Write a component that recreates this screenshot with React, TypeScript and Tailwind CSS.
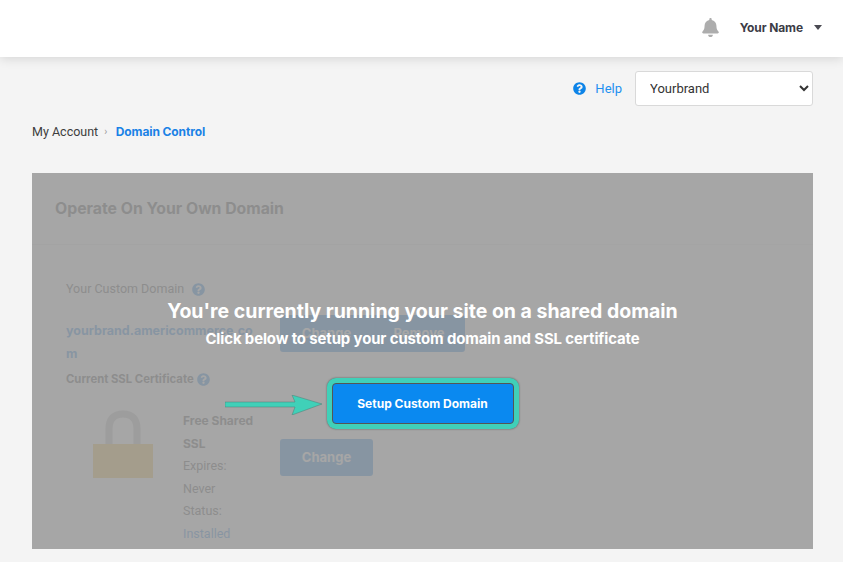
import React from "react";

const bold = "font-['Inter','Liberation_Sans',sans-serif]";

function Q({ className }: { className: string }) {
  return (
    <svg viewBox="0 0 512 512" className={className} fill="currentColor">
      <path d="M504 256c0 137-111 248-248 248S8 393 8 256 119 8 256 8s248 111 248 248zM262.700 90c-54.500 0-89.300 23-116.500 63.800-3.500 5.300-2.400 12.400 2.700 16.300l34.700 26.300c5.200 3.900 12.600 3 16.700-2.100 17.900-22.700 30.100-35.800 57.300-35.800 20.400 0 45.700 13.100 45.700 32.900 0 15-12.400 22.700-32.500 34C247.100 238.500 216 254.900 216 296v4c0 6.600 5.400 12 12 12h56c6.600 0 12-5.400 12-12v-1.300c0-28.500 83.200-29.700 83.200-106.700 0-58-60.200-102-116.500-102zM256 338c-25.400 0-46 20.600-46 46s20.600 46 46 46 46-20.600 46-46-20.600-46-46-46z" />
    </svg>
  );
}

function Bell() {
  return (
    <svg viewBox="0 0 448 512" className="h-[19px] w-[17px] text-[#adadad]" fill="currentColor">
      <path d="M224 512c35.300 0 64-28.700 64-64H160c0 35.300 28.700 64 64 64zm215.400-149.700c-19.300-20.800-55.500-52-55.500-154.300 0-77.700-54.500-139.900-127.900-155.200V32c0-17.700-14.300-32-32-32s-32 14.300-32 32v20.800C118.600 68.100 64.100 130.300 64.100 208c0 102.300-36.200 133.500-55.500 154.300-6 6.400-8.700 14.100-8.600 21.700.1 16.400 13 32 32.100 32h383.800c19.100 0 32-15.600 32.100-32 .1-7.600-2.600-15.300-8.600-21.700z" />
    </svg>
  );
}

function Lock() {
  return (
    <svg viewBox="0 0 60 68" className="h-[68px] w-[60px]">
      <path d="M16 36V19C16 9 21 4 30 4s14 5 14 15v17" fill="none" stroke="#bbbbbb" strokeWidth="7" />
      <rect x="0" y="34" width="60" height="34" fill="#f5c040" />
    </svg>
  );
}

export default function App() {
  return (
    <div className="min-h-[562px] overflow-hidden bg-[#f4f4f4] font-['Roboto','Liberation_Sans',sans-serif]">
      <header className="flex h-[57px] items-center justify-end bg-white pb-[2px] pr-[21px] shadow-[0_2px_10px_rgba(0,0,0,0.12)]">
        <Bell />
        <span className={`${bold} ml-[21px] text-[12px] font-bold tracking-[-0.1px] text-[#3c3c46]`}>Your Name</span>
        <span className="ml-[11px] h-0 w-0 border-x-[4.500px] border-t-[5px] border-x-transparent border-t-[#4a4a52]" />
      </header>

      <div className="flex items-center justify-end pr-[30px] pt-[14px]">
        <Q className="h-[13px] w-[13px] text-[#0d84e8]" />
        <span className="ml-[9px] text-[13px] text-[#1e90f0]">Help</span>
        <select
          defaultValue="Yourbrand"
          className="ml-[13px] h-[35px] w-[178px] rounded-[3px] border border-[#d9d9d9] bg-white pl-[10px] text-[13px] text-[#333]"
        >
          <option>Yourbrand</option>
        </select>
      </div>

      <nav className="flex items-center pl-[32px] pt-[18px] text-[12.500px] leading-[16px]">
        <span className="text-[#3d3d3d]">My Account</span>
        <span className="ml-[6px] mr-[8.500px] text-[10px] text-[#9a9a9a]">›</span>
        <span className={`${bold} text-[12px] font-bold tracking-[-0.1px] text-[#1a82e6]`}>Domain Control</span>
      </nav>

      <section className="relative ml-[32px] mt-[33px] h-[376px] w-[781px] overflow-hidden bg-white">
        <div className="opacity-20">
          <div className="h-[72px] border-b border-[#f0f0f0] pl-[23px] pt-[25px]">
            <h2 className={`${bold} text-[15.800px] font-bold leading-[21px] text-[#444]`}>Operate On Your Own Domain</h2>
          </div>
          <div className="flex pl-[34px] pt-[35px]">
            <div className="w-[214px]">
              <div className="flex items-center text-[12.500px] leading-[18px] text-[#444]">
                Your Custom Domain
                <Q className="ml-[8px] h-[13px] w-[13px] text-[#1a82e6]" />
              </div>
              <div className={`${bold} mt-[22px] w-[192px] break-all text-[12.500px] font-bold leading-[22.500px] text-[#1a82e6]`}>
                yourbrand.americommerce.com
              </div>
              <div className={`${bold} mt-[5px] flex items-center text-[11.300px] font-bold leading-[18px] text-[#444]`}>
                Current SSL Certificate
                <Q className="ml-[3px] h-[13px] w-[13px] text-[#1a82e6]" />
              </div>
              <div className="mt-[22px] flex">
                <div className="ml-[27px]">
                  <Lock />
                </div>
                <div className="ml-[30px] w-[75px] text-[12.500px] leading-[22.500px] text-[#444]">
                  <div className={`${bold} text-[12px] font-bold`}>Free Shared SSL</div>
                  <div>Expires:</div>
                  <div>Never</div>
                  <div>Status:</div>
                  <div className="text-[#1a82e6]">Installed</div>
                </div>
              </div>
            </div>
            <div className="-mt-[8px]">
              <div className="flex pt-[43px]">
                <div className={`${bold} flex h-[37px] w-[93px] items-center justify-center rounded-l-[3px] bg-[#1a82e6] text-[13px] font-bold text-white`}>Change</div>
                <div className={`${bold} flex h-[37px] w-[92px] items-center justify-center rounded-r-[3px] bg-[#1a82e6] text-[13px] font-bold text-white`}>Remove</div>
              </div>
              <div className={`${bold} mt-[87px] flex h-[37px] w-[93px] items-center justify-center rounded-[3px] bg-[#1a82e6] text-[13px] font-bold text-white`}>Change</div>
            </div>
          </div>
        </div>

        <div className={`${bold} absolute inset-0 flex flex-col items-center bg-black/35 pt-[125px] text-white`}>
          <div className="text-[19.500px] font-bold leading-[26px]">You're currently running your site on a shared domain</div>
          <div className="mt-[5px] text-[14.900px] font-bold leading-[20px] tracking-[-0.1px]">Click below to setup your custom domain and SSL certificate</div>
          <div className="relative mt-[29px] rounded-[9px] bg-[#40d0b8] p-[5px] shadow-[0_0_2px_#555]">
            <button className="flex h-[41px] w-[182px] items-center justify-center rounded-[4px] border border-[#555] bg-[#0a89f0] text-[12px] font-bold text-white">
              Setup Custom Domain
            </button>
            <svg viewBox="0 0 97 20" className="absolute left-[-102px] top-[17px] h-[20px] w-[97px]">
              <path d="M0 7H70L67 0 97 9 67 20 70 12H0Z" fill="#40d0b8" stroke="#4d7f76" strokeWidth="0.500" />
            </svg>
          </div>
        </div>
      </section>
    </div>
  );
}
